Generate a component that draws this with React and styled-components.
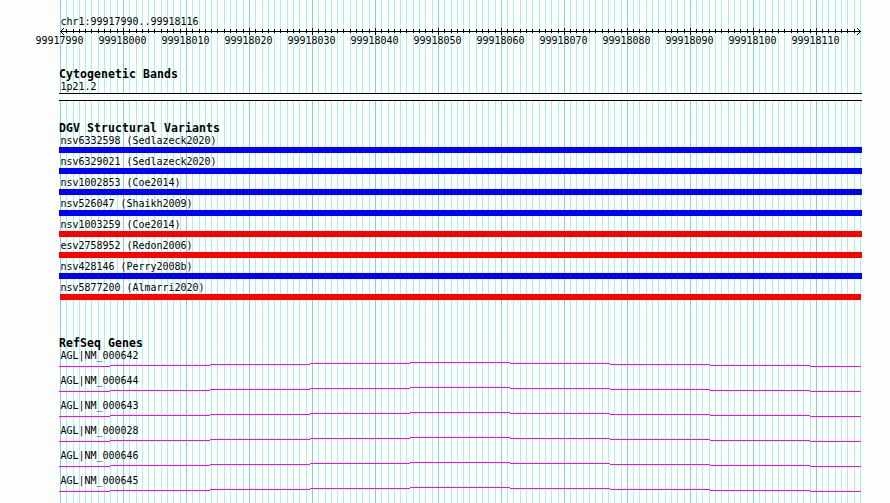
import React from 'react'
import styled, { createGlobalStyle } from 'styled-components'

const GlobalStyle = createGlobalStyle`
  body {
    margin: 0;
    background: #fcfefc;
    overflow: hidden;
  }
`

const Panel = styled.div`
  position: relative;
  box-sizing: border-box;
  width: 890px;
  height: 503px;
  padding: 16px 28px 0 59px;
  overflow: hidden;
  color: #000;
  background: #fcfefc;
`

const GridLines = styled.svg`
  position: absolute;
  top: 0;
  left: 0;
`

const Tracks = styled.div`
  position: relative;
  display: flex;
  flex-direction: column;
  width: 803px;
`

const Track = styled.section`
  display: flex;
  flex-direction: column;
  margin-top: ${props => props.$space || 0}px;
`

const TrackTitle = styled.h2`
  height: 13px;
  margin: 0;
  font: bold 11.5px/13px "DejaVu Sans Mono", monospace;
  letter-spacing: 0.077px;
  white-space: pre;
`

const Label = styled.div`
  height: 12px;
  padding-left: 1.5px;
  font: 10px/12px "DejaVu Sans Mono", monospace;
  letter-spacing: -0.02px;
  white-space: pre;
`

const Scale = styled.div`
  display: flex;
  margin-left: -25px;
`

const ScaleLabel = styled(Label)`
  flex: 0 0 61.5px;
`

const Band = styled.div`
  height: 6px;
  border: solid #000;
  border-width: 1px 0;
  background: #fcfefc;
`

const Features = styled.div`
  display: flex;
  flex-direction: column;
  gap: ${props => props.$gap}px;
`

const Bar = styled.div`
  height: 6px;
  margin: 0 ${props => props.$inset || 0}px;
  background: ${props => props.$color};
`

const Drawing = styled.svg`
  display: block;
`

const BASES = 127
const gain = `#0000ff`
const loss = `#ff0000`

const baseX = index => Math.floor(60.45 + index * 800 / BASES)

const bases = Array.from({ length: BASES + 1 }, (_, index) => ({ x: baseX(index), major: index % 10 === 0 }))

const scaleLabels = Array.from({ length: 13 }, (_, index) => 99917990 + index * 10)

const variants = [
  { name: `nsv6332598 (Sedlazeck2020)`, color: gain },
  { name: `nsv6329021 (Sedlazeck2020)`, color: gain },
  { name: `nsv1002853 (Coe2014)`, color: gain },
  { name: `nsv526047 (Shaikh2009)`, color: gain },
  { name: `nsv1003259 (Coe2014)`, color: loss },
  { name: `esv2758952 (Redon2006)`, color: loss },
  { name: `nsv428146 (Perry2008b)`, color: gain },
  { name: `nsv5877200 (Almarri2020)`, color: loss, inset: 1 }
]

const genes = [`NM_000642`, `NM_000644`, `NM_000643`, `NM_000028`, `NM_000646`, `NM_000645`]

const Grid = () =>
  <GridLines width="890" height="503" shapeRendering="crispEdges">
    {bases.map(({ x, major }) =>
      <rect key={x} x={x} y="0" width="1" height="503" fill={major ? `#84ceec` : `#acf0ec`}/>
    )}
  </GridLines>

const Ruler = () =>
  <Drawing width="803" height="7" viewBox="59 0 803 7" shapeRendering="crispEdges">
    <rect x="60" y="3" width="801" height="1"/>
    {bases.slice(1, -1).map(({ x, major }) =>
      <rect key={x} x={x} y={major ? 0 : 1} width="1" height={major ? 7 : 4}/>
    )}
    <path d="M61 2h1v1h-1zM62 1h1v1h-1zM63 0h1v1h-1zM61 4h1v1h-1zM62 5h1v1h-1zM63 6h1v1h-1z"/>
    <path d="M859 2h1v1h-1zM858 1h1v1h-1zM857 0h1v1h-1zM859 4h1v1h-1zM858 5h1v1h-1zM857 6h1v1h-1z"/>
  </Drawing>

// an intron wider than the panel, so only the top of its arch shows
const Intron = () =>
  <Drawing width="803" height="5" viewBox="59 0 803 5" shapeRendering="crispEdges" fill="#ff00ff">
    <rect x="59" y="4" width="51" height="1"/>
    {[3, 2, 1, 0, 1, 2, 3].map((y, index) =>
      <rect key={index} x={110 + index * 100} y={y} width="100" height="1"/>
    )}
    <rect x="810" y="4" width="51" height="1"/>
  </Drawing>

const App = () =>
  <>
    <GlobalStyle/>
    <Panel>
      <Grid/>
      <Tracks>
        <Track>
          <Label>chr1:99917990..99918116</Label>
          <Ruler/>
          <Scale>
            {scaleLabels.map(label => <ScaleLabel key={label}>{label}</ScaleLabel>)}
          </Scale>
        </Track>
        <Track $space={21}>
          <TrackTitle>Cytogenetic Bands</TrackTitle>
          <Label>1p21.2</Label>
          <Band/>
        </Track>
        <Track $space={21}>
          <TrackTitle>DGV Structural Variants</TrackTitle>
          <Features $gap={3}>
            {variants.map(({ name, color, inset }) =>
              <div key={name}>
                <Label>{name}</Label>
                <Bar $color={color} $inset={inset}/>
              </div>
            )}
          </Features>
        </Track>
        <Track $space={37}>
          <TrackTitle>RefSeq Genes</TrackTitle>
          <Features $gap={8}>
            {genes.map(gene =>
              <div key={gene}>
                <Label>{`AGL|${gene}`}</Label>
                <Intron/>
              </div>
            )}
          </Features>
        </Track>
      </Tracks>
    </Panel>
  </>

export default App
